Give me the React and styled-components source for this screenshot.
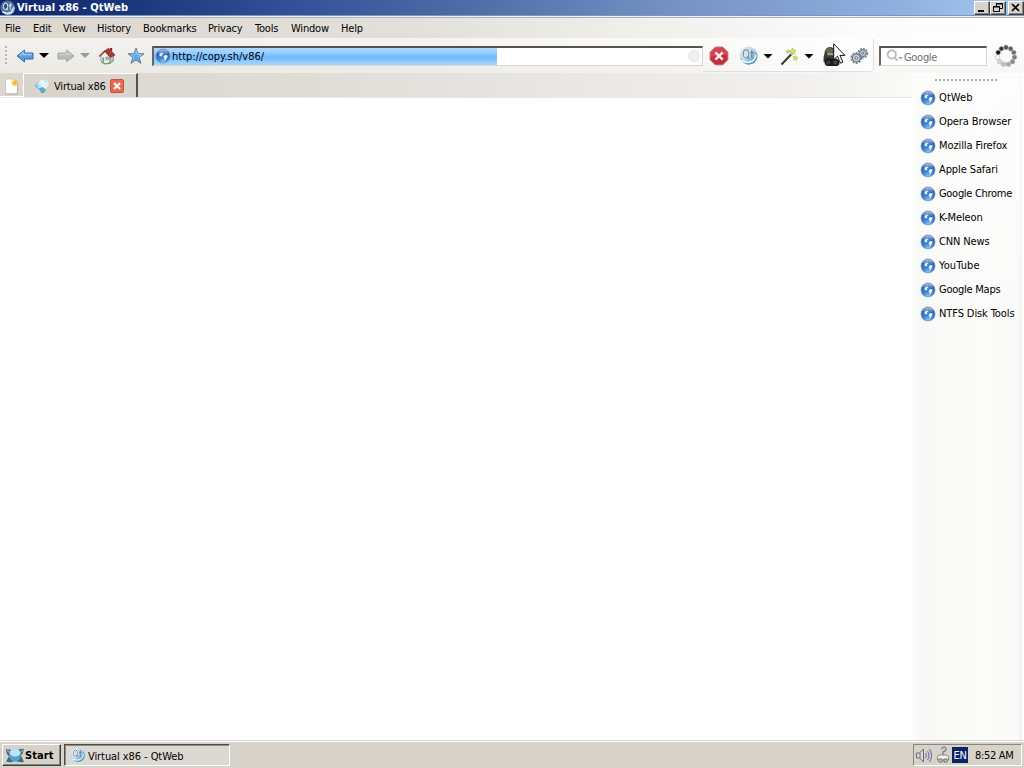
import React from "react";
import styled, { createGlobalStyle, css } from "styled-components";

const Global = createGlobalStyle`
  * { box-sizing: border-box; }
  html, body { margin: 0; padding: 0; overflow: hidden; }
  svg { display: block; flex: none; }
`;

const Desktop = styled.div`
  width: 1024px;
  height: 768px;
  display: flex;
  flex-direction: column;
  background: #fff;
  color: #000;
  font-family: "DejaVu Sans Condensed", "DejaVu Sans", sans-serif;
  font-stretch: condensed;
  font-size: 11px;
  line-height: 14px;
  white-space: nowrap;
  cursor: default;
`;

const Label = styled.span`
  display: inline-block;
  padding-top: ${(p) => p.$drop ?? 2}px;
  letter-spacing: ${(p) => p.$ls ?? -0.3}px;
  font-weight: ${(p) => (p.$bold ? 700 : 400)};
  color: ${(p) => p.$color ?? "#000"};
`;

/* Title bar */
const TitleBar = styled.header`
  height: 15px;
  flex: none;
  display: flex;
  align-items: center;
  background: linear-gradient(90deg, #0c266c 0, #1b377c 130px, #34529a 300px, #4f6fa8 480px, #7593c5 680px, #8fb0e0 900px, #a6caf0 1024px);
`;
const TitleText = styled.div`
  flex: 1;
  padding-left: 1px;
  height: 15px;
  line-height: 13px;
`;
const WindowButtons = styled.div`
  display: flex;
  height: 14px;
`;
const raised = css`
  border: 1px solid;
  border-color: #fff #404040 #404040 #fff;
  box-shadow: inset -1px -1px #86837d;
`;
const WindowButton = styled.div`
  ${raised}
  width: 16px;
  height: 14px;
  margin-left: ${(p) => p.$gap ?? 0}px;
  background: #d6d3cc;
  display: flex;
  align-items: center;
  justify-content: center;
`;
const TitleEdge = styled.div`
  height: 3px;
  flex: none;
  border-top: 1px solid #8194b4;
  border-bottom: 1px solid #aab5c4;
  background: #edf0ef;
`;

/* Menu */
const MenuBar = styled.nav`
  height: 20px;
  flex: none;
  display: flex;
  align-items: center;
  padding-left: 5px;
  background: linear-gradient(90deg, #dcd8d0 0, #e2dfd9 400px, #f1f0ed 650px, #fcfcfb 870px, #fdfdfc 1024px);
`;
const MenuItem = styled.div`
  width: ${(p) => p.$w}px;
`;

/* Toolbar */
const ToolBar = styled.div`
  position: relative;
  height: 35px;
  flex: none;
  display: flex;
  align-items: center;
  background:
    linear-gradient(180deg, rgba(255,255,255,.25), rgba(215,210,200,.16)),
    linear-gradient(90deg, #efede9 0, #f2f0ed 400px, #faf9f8 680px, #fefefe 850px);
`;
const Slot = styled.div`
  width: ${(p) => p.$w}px;
  margin-left: ${(p) => p.$gap ?? 0}px;
  flex: none;
  display: flex;
  justify-content: center;
`;
const Grip = styled.div`
  width: 2px;
  height: 19px;
  margin-left: 5px;
  background: repeating-linear-gradient(180deg, #b8b5b0 0 2px, #f5f4f1 2px 4px);
`;
const Caret = styled.div`
  width: 10px;
  height: 5px;
  margin-left: ${(p) => p.$gap}px;
  background: ${(p) => p.$color ?? "#000"};
  clip-path: polygon(0 0, 100% 0, 50% 100%);
`;
const Field = styled.div`
  width: ${(p) => p.$w}px;
  height: 20px;
  margin-left: ${(p) => p.$gap}px;
  flex: none;
  display: flex;
  align-items: center;
  border: 1px solid #d8d5ce;
  border-top: 2px solid #55534f;
  border-left: 2px solid #686662;
  background: #fff;
`;
const AddressProgress = styled.div`
  width: 343px;
  height: 17px;
  display: flex;
  align-items: center;
  gap: 1px;
  padding-left: 1px;
  background: linear-gradient(180deg, #b0d8ff 0, #9dcfff 25%, #72bdff 50%, #7bc1ff 65%, #acd6fc 100%);
`;
const FieldDot = styled.div`
  width: 12px;
  height: 12px;
  margin: 0 2px 0 auto;
  border-radius: 50%;
  border: 2px solid #e8e8e6;
  background: #f1f1ef;
`;
const ActionGroup = styled.div`
  height: 33px;
  width: 171px;
  flex: none;
  display: flex;
  align-items: center;
  padding: 2px 0 0 6px;
  border-right: 1px solid #dedddb;
  border-bottom: 1px solid #dfdfdd;
  border-bottom-right-radius: 5px;
  background: linear-gradient(90deg, transparent, #fdfdfd);
`;
const Pointer = styled.div`
  position: absolute;
  left: 833px;
  top: 5px;
`;

/* Body */
const Body = styled.div`
  flex: 1;
  display: flex;
  min-height: 0;
`;
const Main = styled.main`
  width: 912px;
  display: flex;
  flex-direction: column;
`;
const TabBar = styled.div`
  height: 25px;
  flex: none;
  display: flex;
  align-items: stretch;
  border-bottom: 1px solid #e9e7e4;
  background: linear-gradient(90deg, #dbd7cf 0, #dfdcd6 300px, #e9e8e5 580px, #f1f0ee 800px, #fafaf9 912px);
`;
const NewTab = styled.div`
  width: 23px;
  padding: 5px 0 0 4px;
  border-bottom: 1px solid #fff;
`;
const Tab = styled.div`
  width: 115px;
  height: 24px;
  display: flex;
  align-items: center;
  padding-left: 10px;
  border-top: 1px solid #fff;
  border-left: 1px solid #fff;
  border-right: 2px solid #55524e;
  background: #d9d5cd;
`;
const TabLabel = styled.div`
  width: 56px;
  margin-left: 4px;
`;
const Page = styled.div`
  flex: 1;
  background: #fff;
`;
const SideBar = styled.aside`
  width: 112px;
  margin-top: 1px;
  padding: 5px 0 0 9px;
  background:
    linear-gradient(180deg, rgba(255,255,255,.6), rgba(255,255,255,0) 260px),
    linear-gradient(90deg, #fdfdfd 0, #f8f8f6 6px, #fbfbfa 70px, #fafaf8 107px, #ececea 109px, #fff 110px);
`;
const SideGrip = styled.div`
  width: 64px;
  height: 2px;
  margin: 0 0 5px 14px;
  background: repeating-linear-gradient(90deg, #aaa 0 2px, transparent 2px 4px);
`;
const Bookmark = styled.div`
  height: 24px;
  display: flex;
  align-items: center;
  gap: 3px;
  margin-left: -1px;
`;

/* Task bar */
const TaskBar = styled.footer`
  height: 28px;
  flex: none;
  display: flex;
  align-items: flex-start;
  padding: 3px 2px 0;
  background: #d7d3cb;
  border-top: 1px solid #d5d3ce;
  box-shadow: inset 0 1px #fff;
`;
const StartButton = styled.div`
  ${raised}
  width: 59px;
  height: 22px;
  display: flex;
  align-items: center;
  padding-left: 2px;
  background: #d6d2ca;
`;
const TaskButton = styled.div`
  width: 166px;
  height: 22px;
  margin-left: 3px;
  padding-left: 5px;
  display: flex;
  align-items: center;
  gap: 2px;
  border: 1px solid;
  border-color: #504e4a #fff #fff #504e4a;
  box-shadow: inset 1px 1px #8d8a84;
  background: #dcd9d3;
`;
const Tray = styled.div`
  width: 109px;
  height: 22px;
  margin-left: auto;
  padding-left: 1px;
  display: flex;
  align-items: center;
  border: 1px solid;
  border-color: #8a8780 #fff #fff #8a8780;
`;
const Language = styled.div`
  width: 16px;
  height: 16px;
  margin: 0 7px 0 2px;
  background: #0a246a;
  text-align: center;
  line-height: 14px;
`;

const GlobeIcon = ({ size = 16 }) => (
  <svg width={size} height={size} viewBox="0 0 16 16">
    <defs>
      <radialGradient id="globe" cx=".5" cy=".95" r=".95">
        <stop offset="0" stopColor="#8cc8fb" />
        <stop offset=".35" stopColor="#3f84d2" />
        <stop offset=".8" stopColor="#2860ad" />
        <stop offset="1" stopColor="#3b6aa8" />
      </radialGradient>
      <linearGradient id="gloss" x2="0" y2="1">
        <stop offset="0" stopColor="#c3d6ea" stopOpacity=".9" />
        <stop offset="1" stopColor="#6f9bd0" stopOpacity=".15" />
      </linearGradient>
    </defs>
    <circle cx="8" cy="8" r="7" fill="url(#globe)" stroke="#5e86b8" strokeWidth=".6" />
    <ellipse cx="8" cy="4.3" rx="5.2" ry="2.900" fill="url(#gloss)" />
    <path d="M4 7.300 5.200 5.200 7.300 4.500l1.100 1L7.200 6.600l.1 1.300-1.500.5z" fill="#dcebf9" />
    <path d="m9.300 7.600 2-.6 1.500 1-.8 1.500-1.200 2.600-1.100.6-.3-2.200-.9-1.400z" fill="#e8f4fd" />
  </svg>
);

const QtIcon = ({ size = 20, dark }) => (
  <svg width={size} height={size} viewBox="0 0 20 20">
    <defs>
      <linearGradient id="qt" x2="1" y2="1">
        <stop offset="0" stopColor="#e4edf3" />
        <stop offset=".5" stopColor="#bcd5e5" />
        <stop offset="1" stopColor="#317daf" />
      </linearGradient>
    </defs>
    <circle cx="9.5" cy="9.5" r="9" fill={dark ? "#526f9e" : "url(#qt)"} />
    <path d="M17.2 6.2q1.6 5.6-2.4 8.8-5 3.4-10 .6Q2 14 1 10q1.600 6.800 7.300 8.400Q16 19 18 13q1-3.500-.8-6.800" fill={dark ? "#b7d1e8" : "#3f9aca"} />
    <path d="M3 14.500q5.500 3.500 10.500.5 3.200-2.300 3.300-6" fill="none" stroke="#eaf7fd" strokeWidth="1.600" />
    <ellipse cx="7" cy="8" rx="2.800" ry="4.200" fill={dark ? "#2d4b86" : "#cfdfe9"} stroke={dark ? "#526f9e" : "#fff"} strokeWidth="2.200" />
    <ellipse cx="7" cy="8" rx="2.800" ry="4.200" fill="none" stroke={dark ? "#e3edf7" : "#6d8ba1"} strokeWidth="1.200" />
    <path d="m8 10.500 2 2.500M12.800 4v7.200q.2 1 1.700.8M11.300 6.600h3.700" fill="none" stroke={dark ? "#e3edf7" : "#68879c"} strokeWidth="1.200" />
  </svg>
);

const ArrowIcon = ({ disabled }) => (
  <svg width="20" height="18" viewBox="0 0 20 18">
    <path
      d={disabled ? "M2 6h8.500V3L18 9l-7.500 6v-3H2z" : "M18 6H9.500V3L2 9l7.500 6v-3H18z"}
      fill={disabled ? "#b9b9b5" : "#5d9be1"}
      stroke={disabled ? "#a9a9a5" : "#3a69ab"}
    />
    <path
      d={disabled ? "M3 7.500h8.500V5.500l3.500 3" : "M17 7.500H8.500V5.500L5 8.500"}
      fill="none"
      stroke={disabled ? "#cfcfcb" : "#9dcafa"}
      strokeWidth="1.4"
    />
  </svg>
);

const HomeIcon = () => (
  <svg width="18" height="18" viewBox="0 0 18 18">
    <path d="M3 8.5 7 5l5 4v7l-5 .8L3 14z" fill="#f2f1e7" stroke="#82908a" strokeWidth=".8" />
    <path d="M12 9.5 15.4 8v6L12 16z" fill="#bfc8c1" stroke="#71847c" strokeWidth=".8" />
    <path d="M7 4 10.500 1.200 17 8l-4.700 2.200z" fill="#b9352f" stroke="#762722" strokeWidth=".8" />
    <path d="M1.2 9.5 7 3.7l5.4 6" fill="none" stroke="#8a4039" strokeWidth="1.3" />
    <path d="M12 1h2.2v3.2L12 2.8z" fill="#733029" />
    <path d="M4.4 10.5h1.8v4.7l-1.8-.7z" fill="#6ba492" />
    <path d="M8 10h2.5v2.7H8z" fill="#a5c6dc" stroke="#668494" strokeWidth=".6" />
    <path d="m3 15 4 2 6-1" fill="none" stroke="#639653" />
  </svg>
);

const StarIcon = () => (
  <svg width="18" height="18" viewBox="0 0 18 18">
    <path d="m9 1 2 5.6 6 .2-4.8 3.7 1.8 5.9-5-3.5-5 3.5 1.8-5.9L1 6.8l6-.2z" fill="#5ba7e8" stroke="#6984a0" strokeLinejoin="round" />
    <path d="m9 3.4 1.3 4.2 4 .1-3.2 2.5" fill="none" stroke="#a1d7fc" />
    <path d="m9 4-1.1 3.8-3.7.2 3 2.2-.9 3" fill="none" stroke="#80c2f4" />
  </svg>
);

const StopIcon = () => (
  <svg width="20" height="20" viewBox="0 0 20 20">
    <path d="M6.3 1h7.4L19 6.3v7.4L13.7 19H6.3L1 13.7V6.3z" fill="#c62d3b" stroke="#c48f94" />
    <path d="M6.3 2h7L18 6.7v2.500Q9 8.500 2 11V6.500z" fill="#d9505c" opacity=".7" />
    <path d="m6.300 6.300 7.400 7.400m0-7.400-7.400 7.400" stroke="#f9e9eb" strokeWidth="2.600" />
  </svg>
);

const WandIcon = () => (
  <svg width="19" height="19" viewBox="0 0 19 19">
    <g fill="#dce64f" stroke="#9aaa45" strokeWidth=".5">
      <path d="m12.5 1 .8 2.2 2.4-.3-1.5 2 1 2-2.3-.7-1.6 1.5V5.2L9.2 4l2.3-.7z" />
      <path d="m8 2.500.6 1.300 1.400.2-1 1 .2 1.400-1.300-.7-1.200.5.300-1.400-1-.9 1.400-.1zM15.500 8.500l.7 1.800 1.800.4-1.500 1.100.1 1.800-1.500-1-1.800.5.600-1.800-1-1.500h1.800z" />
    </g>
    <path d="M1.500 17.500 12.500 6" stroke="#353735" strokeWidth="2" />
    <path d="m11 7.500 2-2.100" stroke="#c9cdb0" strokeWidth="2" />
  </svg>
);

const PrivacyIcon = () => (
  <svg width="20" height="21" viewBox="0 0 20 21">
    <path d="M1.500 16q-.5-5 1-8.500Q3 1 8 1q5 .3 5.200 6.500L12.500 16z" fill="#3a3b37" />
    <ellipse cx="7.300" cy="4.500" rx="3.700" ry="2.600" fill="#66685f" />
    <path d="M5 7.300q3.500-1.300 6.500 0v1.900H5.500z" fill="#a99f6f" />
    <path d="M3 14q3-3 7-1 5-2 7 2 1.500 4-2 5H5q-3.500-1.500-2-6" fill="#17181a" />
    <circle cx="6.300" cy="16.500" r="2.200" fill="#3c3e3f" />
    <circle cx="13.300" cy="16.500" r="2.200" fill="#43464a" />
  </svg>
);

const GearsIcon = () => (
  <svg width="19" height="18" viewBox="0 0 19 18" fill="none">
    <circle cx="12.800" cy="6.200" r="4.400" stroke="#7b8793" strokeWidth="2" strokeDasharray="1.900 1" />
    <circle cx="12.800" cy="6.200" r="3.400" fill="#c3cdd7" stroke="#66717e" />
    <circle cx="12.800" cy="6.200" r="1.100" fill="#f4f5f6" stroke="#66717e" />
    <circle cx="6.300" cy="11" r="4.900" stroke="#7b8793" strokeWidth="2" strokeDasharray="2 1.100" />
    <circle cx="6.300" cy="11" r="4" fill="#c4ced8" stroke="#66717e" />
    <circle cx="6.300" cy="11" r="1.300" fill="#f8f8f8" stroke="#66717e" />
  </svg>
);

const CursorIcon = () => (
  <svg width="13" height="22" viewBox="0 0 13 22">
    <path d="M.7.8v16l3.7-3.6 3.1 7 2.4-1.1-3-6.7h5z" fill="#fff" stroke="#111" />
  </svg>
);

const SearchIcon = () => (
  <svg width="18" height="14" viewBox="0 0 18 14" fill="none">
    <circle cx="5.8" cy="5.500" r="4.1" stroke="#b9b9b7" strokeWidth="1.8" />
    <path d="m8.6 8.6 3 3" stroke="#b9b9b7" strokeWidth="2" />
    <path d="M12 8h5l-2.500 2.800z" fill="#a9a9a7" />
  </svg>
);

const dots = ["#555", "#606060", "#6e6e6e", "#7b7b7b", "#8c8c8c", "#aaa", "#c2c2c2", "#d9d9d9", "#fafafa", "#151515", "#353535"];
const Throbber = () => (
  <svg width="24" height="24" viewBox="0 0 24 24">
    {dots.map((color, i) => {
      const a = ((i * 360) / dots.length - 90) * (Math.PI / 180);
      return <circle key={color} cx={12 + 8.600 * Math.cos(a)} cy={12 + 8.600 * Math.sin(a)} r="2.300" fill={color} stroke="#aaa" strokeWidth=".5" />;
    })}
  </svg>
);

const NewPageIcon = () => (
  <svg width="16" height="17" viewBox="0 0 16 17">
    <path d="M1.500 1h8l4 4v11h-12z" fill="#fffef9" stroke="#c5c2b7" strokeWidth=".8" />
    <path d="M1.500 16h12V6" fill="none" stroke="#b4b1aa" />
    <circle cx="10.500" cy="4.500" r="3" fill="#f8d98c" opacity=".7" />
    <path d="m11 1 1 1.800 2-.2-.9 1.800 1.400 1.500-2 .4-.5 2-1.500-1.400-1.900.8.3-2-1.700-1.100 2-.3z" fill="#f4bc43" />
  </svg>
);

const LoadingIcon = () => (
  <svg width="16" height="17" viewBox="0 0 16 17">
    <path d="M1 6.500 5 5l3 3-2 5-5-3z" fill="#7dbfe0" />
    <path d="M7 2.500 12 2l3 3v4l-3 3H7z" fill="#e9eff1" stroke="#c4cfd3" strokeWidth=".7" />
    <ellipse cx="8" cy="7.500" rx="3.500" ry="4.500" fill="#e9f9ff" opacity=".85" />
    <path d="m5 11 4-1 3 3-2 3H7z" fill="#5aabd8" />
    <path d="m2 6.500 4 2-2 2M10 3l2 3" fill="none" stroke="#b9e4f4" strokeWidth="1.500" />
  </svg>
);

const CloseTabIcon = () => (
  <svg width="14" height="14" viewBox="0 0 14 14">
    <rect x=".5" y=".5" width="13" height="13" rx="1.500" fill="#e46c52" stroke="#bc5140" />
    <path d="m4 4 6 6m0-6-6 6" stroke="#fff4ed" strokeWidth="2.200" />
  </svg>
);

const StartIcon = () => (
  <svg width="20" height="17" viewBox="0 0 20 17">
    <path d="M1 2q5 0 9 3 4-4 9-3-.5 4-3 6.500L19 15q-5 .5-9-1-4 2-9 .5l3-5Q1 7 1 2z" fill="#3f697e" />
    <ellipse cx="10" cy="8.500" rx="6" ry="6" fill="#4fa3cf" />
    <ellipse cx="10" cy="5.800" rx="5.300" ry="3.800" fill="#bfe4f3" />
    <path d="m2 3 3 3M18 3l-3 3" fill="none" stroke="#83bdd2" strokeWidth="1.200" />
  </svg>
);

const SpeakerIcon = () => (
  <svg width="18" height="17" viewBox="0 0 18 17" fill="none">
    <path d="M1.500 6h3l4-4v13l-4-4h-3z" fill="#d8d8d6" stroke="#6b6b6b" />
    <path d="M5 6v5" stroke="#6b6b6b" />
    <path d="M10.500 6q1.500 2.500 0 5m2-7q3 4.500 0 9m2-11q4.200 6.500 0 13" stroke="#757cab" strokeWidth="1.200" />
  </svg>
);

const PlugIcon = () => (
  <svg width="14" height="18" viewBox="0 0 14 18">
    <path d="M5 3q4-4 5 0 0 2-3 3v3" fill="none" stroke="#898783" strokeWidth="1.4" />
    <path d="M3 9h8l1.500 2v3H1.500v-3z" fill="#f3f2ef" stroke="#898783" />
    <path d="M3 13h3v3H3zm5 0h3v3H8z" fill="#deddd9" stroke="#6d6b68" />
  </svg>
);

const menus = [["File", 28], ["Edit", 30], ["View", 34], ["History", 46], ["Bookmarks", 65], ["Privacy", 47], ["Tools", 36], ["Window", 50], ["Help", 30]];
const bookmarks = [["QtWeb", 0.1], ["Opera Browser", -0.1], ["Mozilla Firefox", -0.1], ["Apple Safari", -0.1], ["Google Chrome", -0.3], ["K-Meleon", -0.15], ["CNN News", -0.15], ["YouTube", 0.1], ["Google Maps", -0.25], ["NTFS Disk Tools", -0.1]];

export default function App() {
  return (
    <Desktop>
      <Global />
      <TitleBar>
        <QtIcon size={16} dark />
        <TitleText><Label $bold $color="#fff" $ls={0.08} $drop={1}>Virtual x86 - QtWeb</Label></TitleText>
        <WindowButtons>
          <WindowButton>
            <svg width="10" height="10"><path d="M1 8h6" stroke="#000" strokeWidth="2" /></svg>
          </WindowButton>
          <WindowButton>
            <svg width="10" height="10" fill="none" stroke="#000"><path d="M3.5 3V.5h6v5H7M3 1h7M.5 3.5h6v5h-6zM0 4h7" /></svg>
          </WindowButton>
          <WindowButton $gap={2}>
            <svg width="10" height="10"><path d="m1 1 7 7m0-7-7 7" stroke="#000" strokeWidth="1.7" /></svg>
          </WindowButton>
        </WindowButtons>
      </TitleBar>
      <TitleEdge />
      <MenuBar>
        {menus.map(([name, w]) => <MenuItem key={name} $w={w}><Label $ls={-0.2}>{name}</Label></MenuItem>)}
      </MenuBar>
      <ToolBar>
        <Grip />
        <Slot $w={20} $gap={8}><ArrowIcon /></Slot>
        <Caret $gap={4} />
        <Slot $w={20} $gap={7}><ArrowIcon disabled /></Slot>
        <Caret $gap={4} $color="#999" />
        <Slot $w={18} $gap={8}><HomeIcon /></Slot>
        <Slot $w={18} $gap={11}><StarIcon /></Slot>
        <Field $w={551} $gap={7}>
          <AddressProgress>
            <GlobeIcon />
            <Label $ls={0} $drop={2}>http://copy.sh/v86/</Label>
          </AddressProgress>
          <FieldDot />
        </Field>
        <ActionGroup>
          <Slot $w={20}><StopIcon /></Slot>
          <Slot $w={20} $gap={10}><QtIcon /></Slot>
          <Caret $gap={4} />
          <Slot $w={19} $gap={7}><WandIcon /></Slot>
          <Caret $gap={5} />
          <Slot $w={20} $gap={8}><PrivacyIcon /></Slot>
          <Slot $w={19} $gap={8}><GearsIcon /></Slot>
        </ActionGroup>
        <Field $w={108} $gap={5}>
          <Slot $w={18} $gap={5}><SearchIcon /></Slot>
          <Label $color="#6c6c6c" $ls={-0.3} $drop={3}>Google</Label>
        </Field>
        <Slot $w={24} $gap={7}><Throbber /></Slot>
        <Pointer><CursorIcon /></Pointer>
      </ToolBar>
      <Body>
        <Main>
          <TabBar>
            <NewTab><NewPageIcon /></NewTab>
            <Tab>
              <LoadingIcon />
              <TabLabel><Label $ls={-0.2}>Virtual x86</Label></TabLabel>
              <CloseTabIcon />
            </Tab>
          </TabBar>
          <Page />
        </Main>
        <SideBar>
          <SideGrip />
          {bookmarks.map(([name, ls]) => (
            <Bookmark key={name}><GlobeIcon /><Label $ls={ls} $drop={0}>{name}</Label></Bookmark>
          ))}
        </SideBar>
      </Body>
      <TaskBar>
        <StartButton><StartIcon /><Label $bold $ls={0.1}>Start</Label></StartButton>
        <TaskButton><QtIcon size={16} /><Label $ls={-0.08} $drop={3}>Virtual x86 - QtWeb</Label></TaskButton>
        <Tray>
          <SpeakerIcon />
          <Slot $w={14} $gap={3}><PlugIcon /></Slot>
          <Language><Label $color="#fff">EN</Label></Language>
          <Label>8:52 AM</Label>
        </Tray>
      </TaskBar>
    </Desktop>
  );
}
